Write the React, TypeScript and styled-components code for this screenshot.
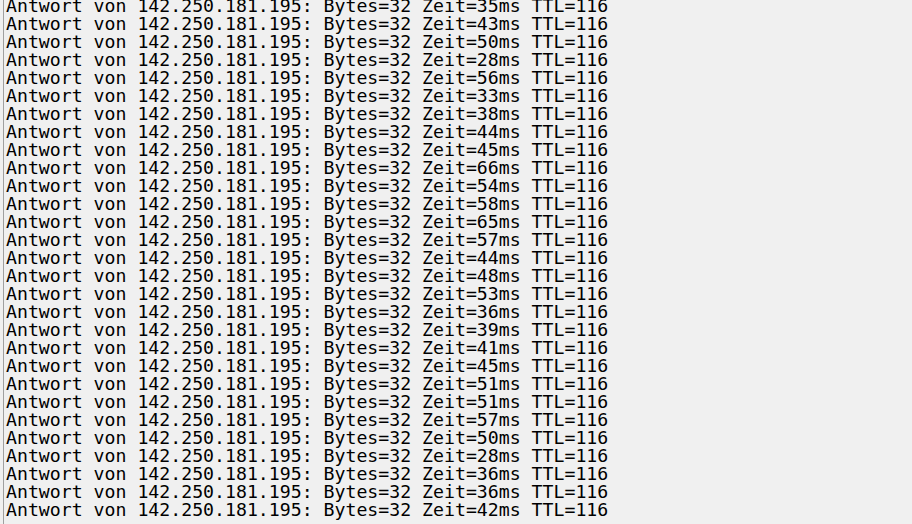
import React from 'react';
import styled, { createGlobalStyle } from 'styled-components';

const GlobalStyle = createGlobalStyle`
  html, body {
    margin: 0;
    padding: 0;
    background-color: #f0f0f0;
    overflow: hidden;
  }
`;

const ConsoleWindow = styled.div`
  height: 524px;
  margin-left: 3px;
  border-left: 1px solid #a0a0a0;
  padding-left: 2px;
  overflow: hidden;
  background-color: #f0f0f0;
`;

const Log = styled.div`
  margin-top: -3px;
  font-family: "DejaVu Sans Mono", "Liberation Mono", monospace;
  font-size: 18.2px;
  line-height: 18px;
  color: #000;
  white-space: pre;
`;

const Line = styled.div`
  height: 18px;
`;

const HOST = '142.250.181.195';
const times = [
  35, 43, 50, 28, 56, 33, 38, 44, 45, 66, 54, 58, 65, 57, 44,
  48, 53, 36, 39, 41, 45, 51, 51, 57, 50, 28, 36, 36, 42,
];

export default function App() {
  return (
    <>
      <GlobalStyle />
      <ConsoleWindow>
        <Log>
          {times.map((t, i) => (
            <Line key={i}>{`Antwort von ${HOST}: Bytes=32 Zeit=${t}ms TTL=116`}</Line>
          ))}
        </Log>
      </ConsoleWindow>
    </>
  );
}
